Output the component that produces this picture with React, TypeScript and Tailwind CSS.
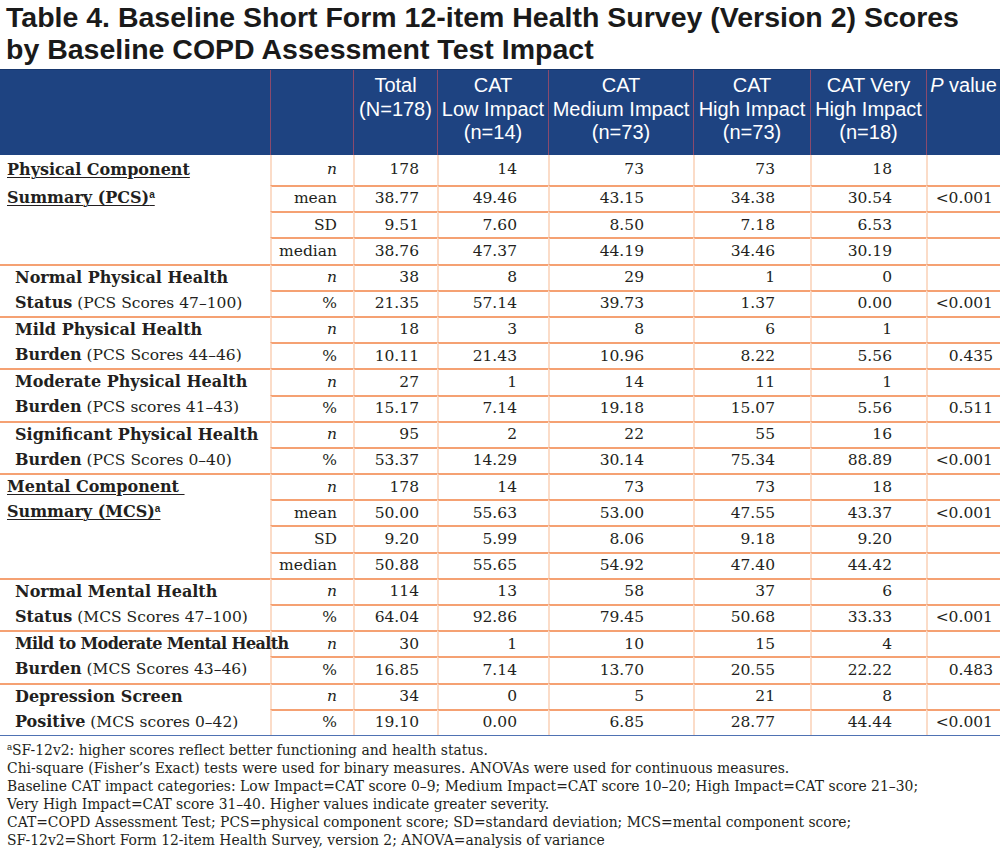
import React from "react";

type Group = {
  label: React.ReactNode[];
  indent: boolean;
  rows: { stat: React.ReactNode; vals: string[] }[];
};

const N = <span className="italic">n</span>;

const groups: Group[] = [
  {
    indent: false,
    label: [
      <span className="font-bold text-[16px] underline decoration-1 underline-offset-2">Physical Component</span>,
      <span className="font-bold text-[16px] underline decoration-1 underline-offset-2">
        Summary (PCS)<sup className="text-[10px] font-['Liberation_Sans'] font-bold">a</sup>
      </span>,
    ],
    rows: [
      { stat: N, vals: ["178", "14", "73", "73", "18", ""] },
      { stat: "mean", vals: ["38.77", "49.46", "43.15", "34.38", "30.54", "<0.001"] },
      { stat: "SD", vals: ["9.51", "7.60", "8.50", "7.18", "6.53", ""] },
      { stat: "median", vals: ["38.76", "47.37", "44.19", "34.46", "30.19", ""] },
    ],
  },
  {
    indent: true,
    label: [
      <span className="font-bold text-[16px]">Normal Physical Health</span>,
      <span><span className="font-bold text-[16px]">Status</span> (PCS Scores 47–100)</span>,
    ],
    rows: [
      { stat: N, vals: ["38", "8", "29", "1", "0", ""] },
      { stat: "%", vals: ["21.35", "57.14", "39.73", "1.37", "0.00", "<0.001"] },
    ],
  },
  {
    indent: true,
    label: [
      <span className="font-bold text-[16px]">Mild Physical Health</span>,
      <span><span className="font-bold text-[16px]">Burden</span> (PCS Scores 44–46)</span>,
    ],
    rows: [
      { stat: N, vals: ["18", "3", "8", "6", "1", ""] },
      { stat: "%", vals: ["10.11", "21.43", "10.96", "8.22", "5.56", "0.435"] },
    ],
  },
  {
    indent: true,
    label: [
      <span className="font-bold text-[16px]">Moderate Physical Health</span>,
      <span><span className="font-bold text-[16px]">Burden</span> (PCS scores 41–43)</span>,
    ],
    rows: [
      { stat: N, vals: ["27", "1", "14", "11", "1", ""] },
      { stat: "%", vals: ["15.17", "7.14", "19.18", "15.07", "5.56", "0.511"] },
    ],
  },
  {
    indent: true,
    label: [
      <span className="font-bold text-[16px]">Significant Physical Health</span>,
      <span><span className="font-bold text-[16px]">Burden</span> (PCS Scores 0–40)</span>,
    ],
    rows: [
      { stat: N, vals: ["95", "2", "22", "55", "16", ""] },
      { stat: "%", vals: ["53.37", "14.29", "30.14", "75.34", "88.89", "<0.001"] },
    ],
  },
  {
    indent: false,
    label: [
      <span className="font-bold text-[16px] underline decoration-1 underline-offset-2">Mental Component&nbsp;</span>,
      <span className="font-bold text-[16px] underline decoration-1 underline-offset-2">
        Summary (MCS)<sup className="text-[10px] font-['Liberation_Sans'] font-bold">a</sup>
      </span>,
    ],
    rows: [
      { stat: N, vals: ["178", "14", "73", "73", "18", ""] },
      { stat: "mean", vals: ["50.00", "55.63", "53.00", "47.55", "43.37", "<0.001"] },
      { stat: "SD", vals: ["9.20", "5.99", "8.06", "9.18", "9.20", ""] },
      { stat: "median", vals: ["50.88", "55.65", "54.92", "47.40", "44.42", ""] },
    ],
  },
  {
    indent: true,
    label: [
      <span className="font-bold text-[16px]">Normal Mental Health</span>,
      <span><span className="font-bold text-[16px]">Status</span> (MCS Scores 47–100)</span>,
    ],
    rows: [
      { stat: N, vals: ["114", "13", "58", "37", "6", ""] },
      { stat: "%", vals: ["64.04", "92.86", "79.45", "50.68", "33.33", "<0.001"] },
    ],
  },
  {
    indent: true,
    label: [
      <span className="font-bold text-[16px] tracking-[-0.6px]">Mild to Moderate Mental Health</span>,
      <span><span className="font-bold text-[16px]">Burden</span> (MCS Scores 43–46)</span>,
    ],
    rows: [
      { stat: N, vals: ["30", "1", "10", "15", "4", ""] },
      { stat: "%", vals: ["16.85", "7.14", "13.70", "20.55", "22.22", "0.483"] },
    ],
  },
  {
    indent: true,
    label: [
      <span className="font-bold text-[16px]">Depression Screen</span>,
      <span><span className="font-bold text-[16px]">Positive</span> (MCS scores 0–42)</span>,
    ],
    rows: [
      { stat: N, vals: ["34", "0", "5", "21", "8", ""] },
      { stat: "%", vals: ["19.10", "0.00", "6.85", "28.77", "44.44", "<0.001"] },
    ],
  },
];

const valCols = [
  "w-[84px] pr-[18px]",
  "w-[111px] pr-[31px]",
  "w-[145px] pr-[49px]",
  "w-[117px] pr-[35px]",
  "w-[116px] pr-[34px]",
  "w-[74px] pr-[7px]",
];

const headCols: { w: string; lines: React.ReactNode[] }[] = [
  { w: "w-[84px]", lines: ["Total", "(N=178)"] },
  { w: "w-[111px]", lines: ["CAT", "Low Impact", "(n=14)"] },
  { w: "w-[145px]", lines: ["CAT", "Medium Impact", "(n=73)"] },
  { w: "w-[117px]", lines: ["CAT", "High Impact", "(n=73)"] },
  { w: "w-[116px]", lines: ["CAT Very", "High Impact", "(n=18)"] },
  {
    w: "w-[74px]",
    lines: [
      <span>
        <span className="italic">P</span> value
      </span>,
    ],
  },
];

const footnotes: React.ReactNode[] = [
  <span>
    <sup className="text-[9px] font-['Liberation_Sans']">a</sup>SF-12v2: higher scores reflect better functioning and health status.
  </span>,
  "Chi-square (Fisher’s Exact) tests were used for binary measures. ANOVAs were used for continuous measures.",
  "Baseline CAT impact categories: Low Impact=CAT score 0–9; Medium Impact=CAT score 10–20; High Impact=CAT score 21–30;",
  "Very High Impact=CAT score 31–40. Higher values indicate greater severity.",
  "CAT=COPD Assessment Test; PCS=physical component score; SD=standard deviation; MCS=mental component score;",
  "SF-12v2=Short Form 12-item Health Survey, version 2; ANOVA=analysis of variance",
];

export default function App() {
  let rowIndex = 0;
  return (
    <div className="w-[1000px] h-[852px] bg-white overflow-hidden text-[#231f20]">
      {/* Title */}
      <div className="h-[69px] pl-[6px] pt-[1px] font-['Liberation_Sans',Arial,sans-serif] font-bold text-[28.5px] leading-[32px] text-[#1a1a1a]">
        <div className="whitespace-nowrap">Table 4. Baseline Short Form 12-item Health Survey (Version 2) Scores</div>
        <div className="whitespace-nowrap">by Baseline COPD Assessment Test Impact</div>
      </div>

      {/* Header */}
      <div className="flex h-[86px] bg-[#1e4381] border-t border-[#17376d] text-white font-['Liberation_Sans',Arial,sans-serif] text-[20px] leading-[23.5px]">
        <div className="w-[270px]" />
        <div className="w-[83px] border-l border-[#8a4a6c]" />
        {headCols.map((c, i) => (
          <div key={i} className={`${c.w} border-l border-[#8a4a6c] pt-[4px] text-center whitespace-nowrap`}>
            {c.lines.map((l, j) => (
              <div key={j}>{l}</div>
            ))}
          </div>
        ))}
      </div>

      {/* Body */}
      <div className="font-['DejaVu_Serif',serif] text-[15.5px] border-b border-[#4f72b3]">
        {groups.map((g, gi) =>
          g.rows.map((r, ri) => {
            const first = rowIndex === 0;
            rowIndex++;
            const h = first ? "h-[30px]" : "h-[26.2px]";
            const groupTop = ri === 0 && !first;
            const innerTop = !first;
            return (
              <div key={`${gi}-${ri}`} className={`flex ${h}`}>
                <div
                  className={`relative z-10 w-[270px] shrink-0 flex items-center whitespace-nowrap ${
                    g.indent ? "pl-[15px]" : "pl-[7px]"
                  } ${groupTop ? "border-t-2 border-[#f5a173]" : ""}`}
                >
                  {g.label[ri] ?? ""}
                </div>
                <div
                  className={`w-[83px] shrink-0 flex items-center justify-end pr-[16px] border-l-2 border-l-[#fbdcc8] ${
                    innerTop ? "border-t-2 border-t-[#f5a173]" : ""
                  }`}
                >
                  {r.stat}
                </div>
                {r.vals.map((v, vi) => (
                  <div
                    key={vi}
                    className={`${valCols[vi]} shrink-0 flex items-center justify-end border-l-2 border-l-[#fbdcc8] ${
                      innerTop ? "border-t-2 border-t-[#f5a173]" : ""
                    }`}
                  >
                    {v}
                  </div>
                ))}
              </div>
            );
          })
        )}
      </div>

      {/* Footnotes */}
      <div className="pt-[5px] pl-[7px] font-['DejaVu_Serif',serif] text-[13.9px] leading-[18px] text-[#231f20]">
        {footnotes.map((f, i) => (
          <div key={i} className="whitespace-nowrap">
            {f}
          </div>
        ))}
      </div>
    </div>
  );
}
